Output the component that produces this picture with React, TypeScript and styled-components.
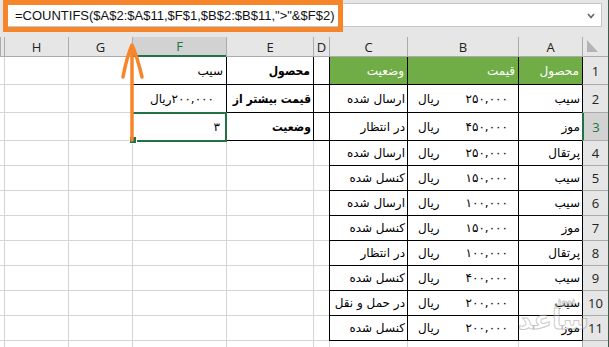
import React from 'react';
import styled, { createGlobalStyle } from 'styled-components';

const GlobalStyle = createGlobalStyle`
  html, body {
    margin: 0;
    padding: 0;
    background: #fff;
  }
  body {
    width: 609px;
    height: 347px;
    overflow: hidden;
  }
`;

const GRID = '#d4d4d4';
const HEAD_LINE = '#ababab';
const EXCEL_GREEN = '#217346';
const ORANGE = '#f7862b';
const FA_FONT = '"DejaVu Sans", sans-serif';
const FA_BOLD_FONT = '"DejaVu Sans Condensed", "DejaVu Sans", sans-serif';
const UI_FONT = '"Open Sans", "Liberation Sans", sans-serif';

interface TableRow {
  n: number;
  product: string;
  price: string;
  status: string;
}

const tableRows: TableRow[] = [
  { n: 2, product: 'سیب', price: '۲۵۰,۰۰۰', status: 'ارسال شده' },
  { n: 3, product: 'موز', price: '۴۵۰,۰۰۰', status: 'در انتظار' },
  { n: 4, product: 'پرتقال', price: '۲۵۰,۰۰۰', status: 'ارسال شده' },
  { n: 5, product: 'سیب', price: '۱۵۰,۰۰۰', status: 'کنسل شده' },
  { n: 6, product: 'سیب', price: '۱۰۰,۰۰۰', status: 'ارسال شده' },
  { n: 7, product: 'موز', price: '۱۵۰,۰۰۰', status: 'کنسل شده' },
  { n: 8, product: 'پرتقال', price: '۱۰۰,۰۰۰', status: 'در انتظار' },
  { n: 9, product: 'سیب', price: '۴۰۰,۰۰۰', status: 'کنسل شده' },
  { n: 10, product: 'سیب', price: '۲۰۰,۰۰۰', status: 'در حمل و نقل' },
  { n: 11, product: 'موز', price: '۲۰۰,۰۰۰', status: 'کنسل شده' },
];

// criteria block E1:F3
const criteria = [
  { label: 'محصول', value: 'سیب' },
  { label: 'قیمت بیشتر از', value: '۲۰۰,۰۰۰ریال' },
  { label: 'وضعیت', value: '۳' },
];

const columns = ['A', 'B', 'C', 'D', 'E', 'F', 'G', 'H', ''];

const Window = styled.div`
  position: relative;
  width: 609px;
  height: 347px;
  background: #e6e6e6;
  border-right: 1px solid #3f5a48;
  box-sizing: border-box;
  overflow: hidden;
`;

const TopBar = styled.div`
  height: 37px;
  padding: 3px 6px 0 3px;
  box-sizing: border-box;
`;

const FormulaBox = styled.div`
  height: 24px;
  box-sizing: border-box;
  background: #fff;
  border: 1px solid #c6c6c6;
  display: flex;
  align-items: center;
  justify-content: space-between;
  padding: 0 6px 0 11px;
  font-family: "Liberation Sans", sans-serif;
  font-size: 13px;
  color: #111;
`;

const Chevron = styled.svg`
  width: 8px;
  height: 6px;
  margin-top: 2px;
`;

const Highlight = styled.div`
  position: absolute;
  left: 3px;
  top: 0;
  width: 340px;
  height: 32px;
  box-sizing: border-box;
  border: 5px solid ${ORANGE};
  pointer-events: none;
`;

const Sheet = styled.div`
  direction: rtl;
  display: grid;
  grid-template-columns: 26px 64px 111px 78px 16px 87px 94px 64px 64px 4px;
  grid-template-rows: 20px repeat(3, 28px) repeat(8, 25px) 10px;
  background: #fff;
`;

const ColHead = styled.div<{ $active?: boolean }>`
  box-sizing: border-box;
  display: flex;
  align-items: center;
  justify-content: center;
  background: ${(p) => (p.$active ? '#d2d2d2' : '#e6e6e6')};
  border-left: 1px solid ${HEAD_LINE};
  border-bottom: ${(p) => (p.$active ? `2px solid ${EXCEL_GREEN}` : `1px solid ${HEAD_LINE}`)};
  font-family: ${UI_FONT};
  font-size: 13px;
  color: ${(p) => (p.$active ? EXCEL_GREEN : '#222')};
`;

const Corner = styled.div`
  box-sizing: border-box;
  display: flex;
  align-items: flex-end;
  justify-content: flex-end;
  padding: 0 0 4px 4px;
  background: #e6e6e6;
  border-left: 1px solid ${HEAD_LINE};
  border-bottom: 1px solid ${HEAD_LINE};
`;

const RowNum = styled.div<{ $active?: boolean; $edge?: boolean }>`
  box-sizing: border-box;
  display: flex;
  align-items: center;
  justify-content: center;
  background: ${(p) => (p.$active ? '#d2d2d2' : '#e6e6e6')};
  border-left: ${(p) =>
    p.$active ? `2px solid ${EXCEL_GREEN}` : `1px solid ${p.$edge ? '#000' : HEAD_LINE}`};
  border-bottom: 1px solid ${HEAD_LINE};
  font-family: ${UI_FONT};
  font-size: 13px;
  color: ${(p) => (p.$active ? EXCEL_GREEN : '#222')};
`;

const Cell = styled.div<{
  $dark?: boolean;
  $bg?: string;
  $bold?: boolean;
  $color?: string;
  $pad?: number;
}>`
  position: relative;
  box-sizing: border-box;
  display: flex;
  align-items: center;
  justify-content: flex-start;
  padding: 0 ${(p) => p.$pad ?? 2}px 0 2px;
  background: ${(p) => p.$bg ?? '#fff'};
  border-left: 1px solid ${(p) => (p.$dark ? '#000' : GRID)};
  border-bottom: 1px solid ${(p) => (p.$dark ? '#000' : GRID)};
  font-family: ${(p) => (p.$bold ? FA_BOLD_FONT : FA_FONT)};
  font-size: 12px;
  font-weight: ${(p) => (p.$bold ? 700 : 400)};
  color: ${(p) => p.$color ?? '#000'};
  white-space: nowrap;
  overflow: hidden;
`;

const MoneyCell = styled(Cell)`
  justify-content: space-between;
  padding: 0 10px 0 10px;
`;

const ActiveCell = styled(Cell)`
  overflow: visible;
  outline: 2px solid ${EXCEL_GREEN};
  outline-offset: -1px;
  z-index: 2;
`;

const FillHandle = styled.span`
  position: absolute;
  left: -4px;
  bottom: -4px;
  width: 6px;
  height: 6px;
  background: ${EXCEL_GREEN};
  border: 1px solid #fff;
`;

const Arrow = styled.svg`
  position: absolute;
  left: 118px;
  top: 40px;
  width: 30px;
  height: 102px;
  z-index: 3;
  overflow: visible;
`;

const Watermark = styled.div`
  position: absolute;
  left: 518px;
  top: 296px;
  direction: rtl;
  display: flex;
  flex-direction: column;
  align-items: center;
  line-height: 1;
  font-family: ${FA_FONT};
  font-weight: 700;
  color: rgba(255, 255, 255, 0.3);
  -webkit-text-stroke: 1px rgba(150, 150, 150, 0.5);
  pointer-events: none;
  z-index: 4;
`;

const MarkSmall = styled.span`
  font-size: 10px;
  margin-left: 24px;
`;

const MarkBig = styled.span`
  font-size: 27px;
  letter-spacing: 1px;
`;

function App() {
  return (
    <>
      <GlobalStyle />
      <Window>
        <TopBar>
          <FormulaBox>
            <span>=COUNTIFS($A$2:$A$11,$F$1,$B$2:$B$11,"&gt;"&amp;$F$2)</span>
            <Chevron viewBox="0 0 8 6">
              <path d="M1 1 L4 4.5 L7 1" fill="none" stroke="#666" strokeWidth="1.6" />
            </Chevron>
          </FormulaBox>
        </TopBar>

        <Sheet>
          {/* column header row */}
          <Corner>
            <svg width="11" height="12" viewBox="0 0 11 12">
              <polygon points="0,0 0,12 11,12" fill="#b4b4b4" />
            </svg>
          </Corner>
          {columns.map((c, i) => (
            <ColHead key={i} $active={c === 'F'}>
              {c}
            </ColHead>
          ))}

          {/* row 1: table header + criteria */}
          <RowNum $edge>1</RowNum>
          <Cell $dark $bg="#70ad47" $color="#fff" $pad={3}>محصول</Cell>
          <Cell $dark $bg="#70ad47" $color="#fff" $pad={3}>قیمت</Cell>
          <Cell $dark $bg="#70ad47" $color="#fff" $pad={3}>وضعیت</Cell>
          <Cell $dark />
          <Cell $dark $bold $pad={3}>{criteria[0].label}</Cell>
          <Cell $dark $pad={3}>{criteria[0].value}</Cell>
          <Cell />
          <Cell />
          <Cell />

          {tableRows.map((r) => {
            const crit = r.n <= 3 ? criteria[r.n - 1] : null;
            return (
              <React.Fragment key={r.n}>
                <RowNum $edge $active={r.n === 3}>{r.n}</RowNum>
                <Cell $dark>{r.product}</Cell>
                <MoneyCell $dark>
                  <span>{r.price}</span>
                  <span>ریال</span>
                </MoneyCell>
                <Cell $dark>{r.status}</Cell>
                <Cell $dark={!!crit} />
                {crit ? <Cell $dark $bold $pad={2}>{crit.label}</Cell> : <Cell />}
                {crit && r.n === 3 ? (
                  <ActiveCell $dark $pad={6}>
                    {crit.value}
                    <FillHandle />
                  </ActiveCell>
                ) : crit ? (
                  <Cell $dark $pad={12}>{crit.value}</Cell>
                ) : (
                  <Cell />
                )}
                <Cell />
                <Cell />
                <Cell />
              </React.Fragment>
            );
          })}

          {/* row 12, cut off at the bottom edge */}
          <RowNum />
          {columns.map((_, i) => (
            <Cell key={i} />
          ))}
        </Sheet>

        <Highlight />

        <Arrow viewBox="0 0 30 102">
          <path
            d="M14 100 L14 5 M5 37 Q9 16 14 5 Q19 16 24 37"
            fill="none"
            stroke={ORANGE}
            strokeWidth="3.5"
            strokeLinecap="round"
            strokeLinejoin="round"
          />
        </Arrow>

        <Watermark>
          <MarkSmall>نیوز</MarkSmall>
          <MarkBig>ساعد</MarkBig>
        </Watermark>
      </Window>
    </>
  );
}

export default App;
